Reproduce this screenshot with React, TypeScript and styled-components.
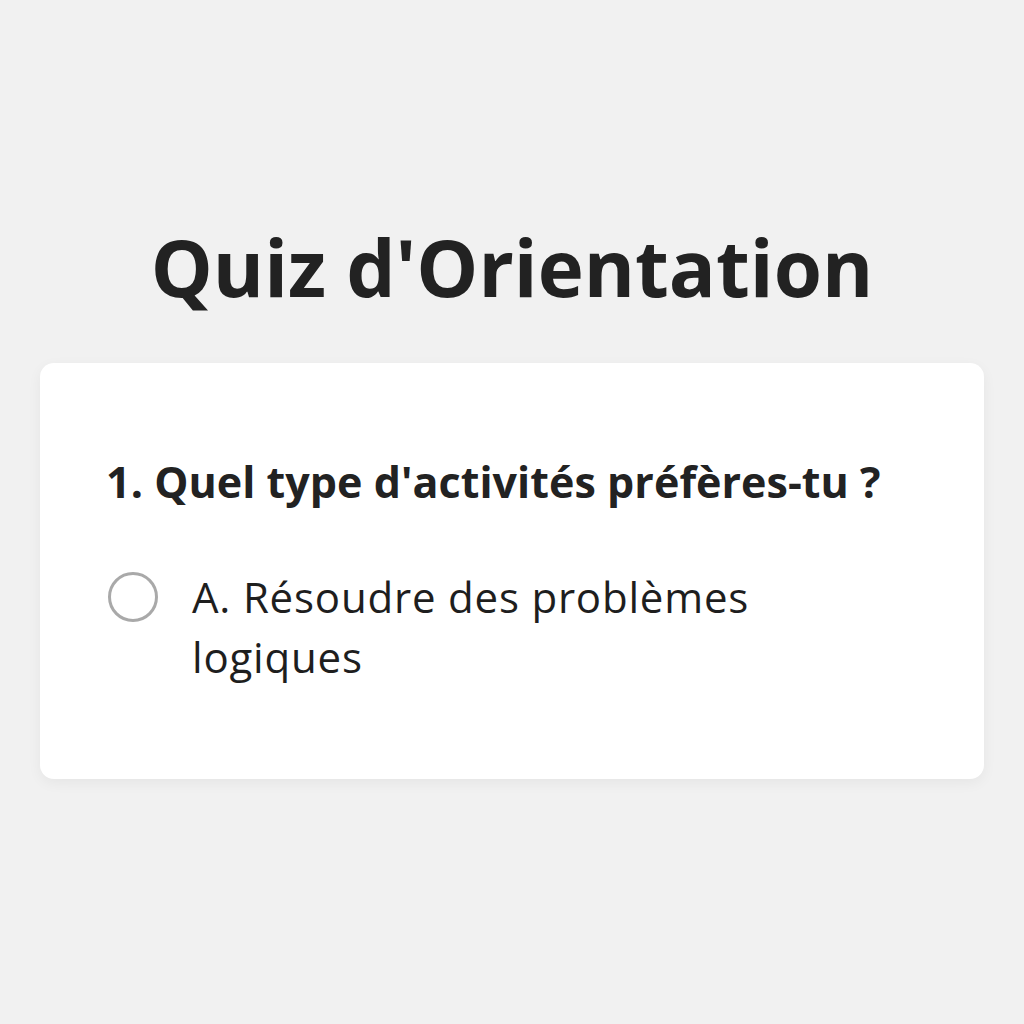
import React from "react";
import styled, { createGlobalStyle } from "styled-components";

const GlobalStyle = createGlobalStyle`
  body {
    margin: 0;
    background: #f1f1f1;
    font-family: "Open Sans", "Liberation Sans", sans-serif;
    color: #222222;
  }
`;

const Page = styled.div`
  width: 1024px;
  height: 1024px;
  padding: 221px 40px 0;
  box-sizing: border-box;
  display: flex;
  flex-direction: column;
  align-items: center;
`;

const Title = styled.h1`
  margin: 0 0 50px;
  font-size: 78px;
  line-height: 92px;
  font-weight: 700;
  color: #222222;
`;

const Card = styled.div`
  width: 100%;
  box-sizing: border-box;
  background: #ffffff;
  border-radius: 14px;
  box-shadow: 0 4px 14px rgba(0, 0, 0, 0.05);
  padding: 93px 66px 92px;
  display: flex;
  flex-direction: column;
  gap: 59px;
`;

const Question = styled.h2`
  margin: 0;
  font-size: 43px;
  line-height: 52px;
  font-weight: 700;
  letter-spacing: 0.05px;
  color: #222222;
`;

const Option = styled.label`
  display: flex;
  align-items: flex-start;
  gap: 34px;
  cursor: pointer;
`;

const Radio = styled.span`
  flex: none;
  width: 50px;
  height: 50px;
  margin: 5px 0 0 2px;
  box-sizing: border-box;
  border-radius: 50%;
  border: 3px solid #a9a9a9;
`;

const OptionText = styled.span`
  font-size: 42px;
  line-height: 60px;
  font-weight: 400;
  letter-spacing: 0.8px;
  color: #1e1e1e;
  max-width: 620px;
`;

export default function App() {
  return (
    <>
      <GlobalStyle />
      <Page>
        <Title>Quiz d'Orientation</Title>
        <Card>
          <Question>1. Quel type d'activités préfères-tu ?</Question>
          <Option>
            <Radio />
            <OptionText>A. Résoudre des problèmes logiques</OptionText>
          </Option>
        </Card>
      </Page>
    </>
  );
}
